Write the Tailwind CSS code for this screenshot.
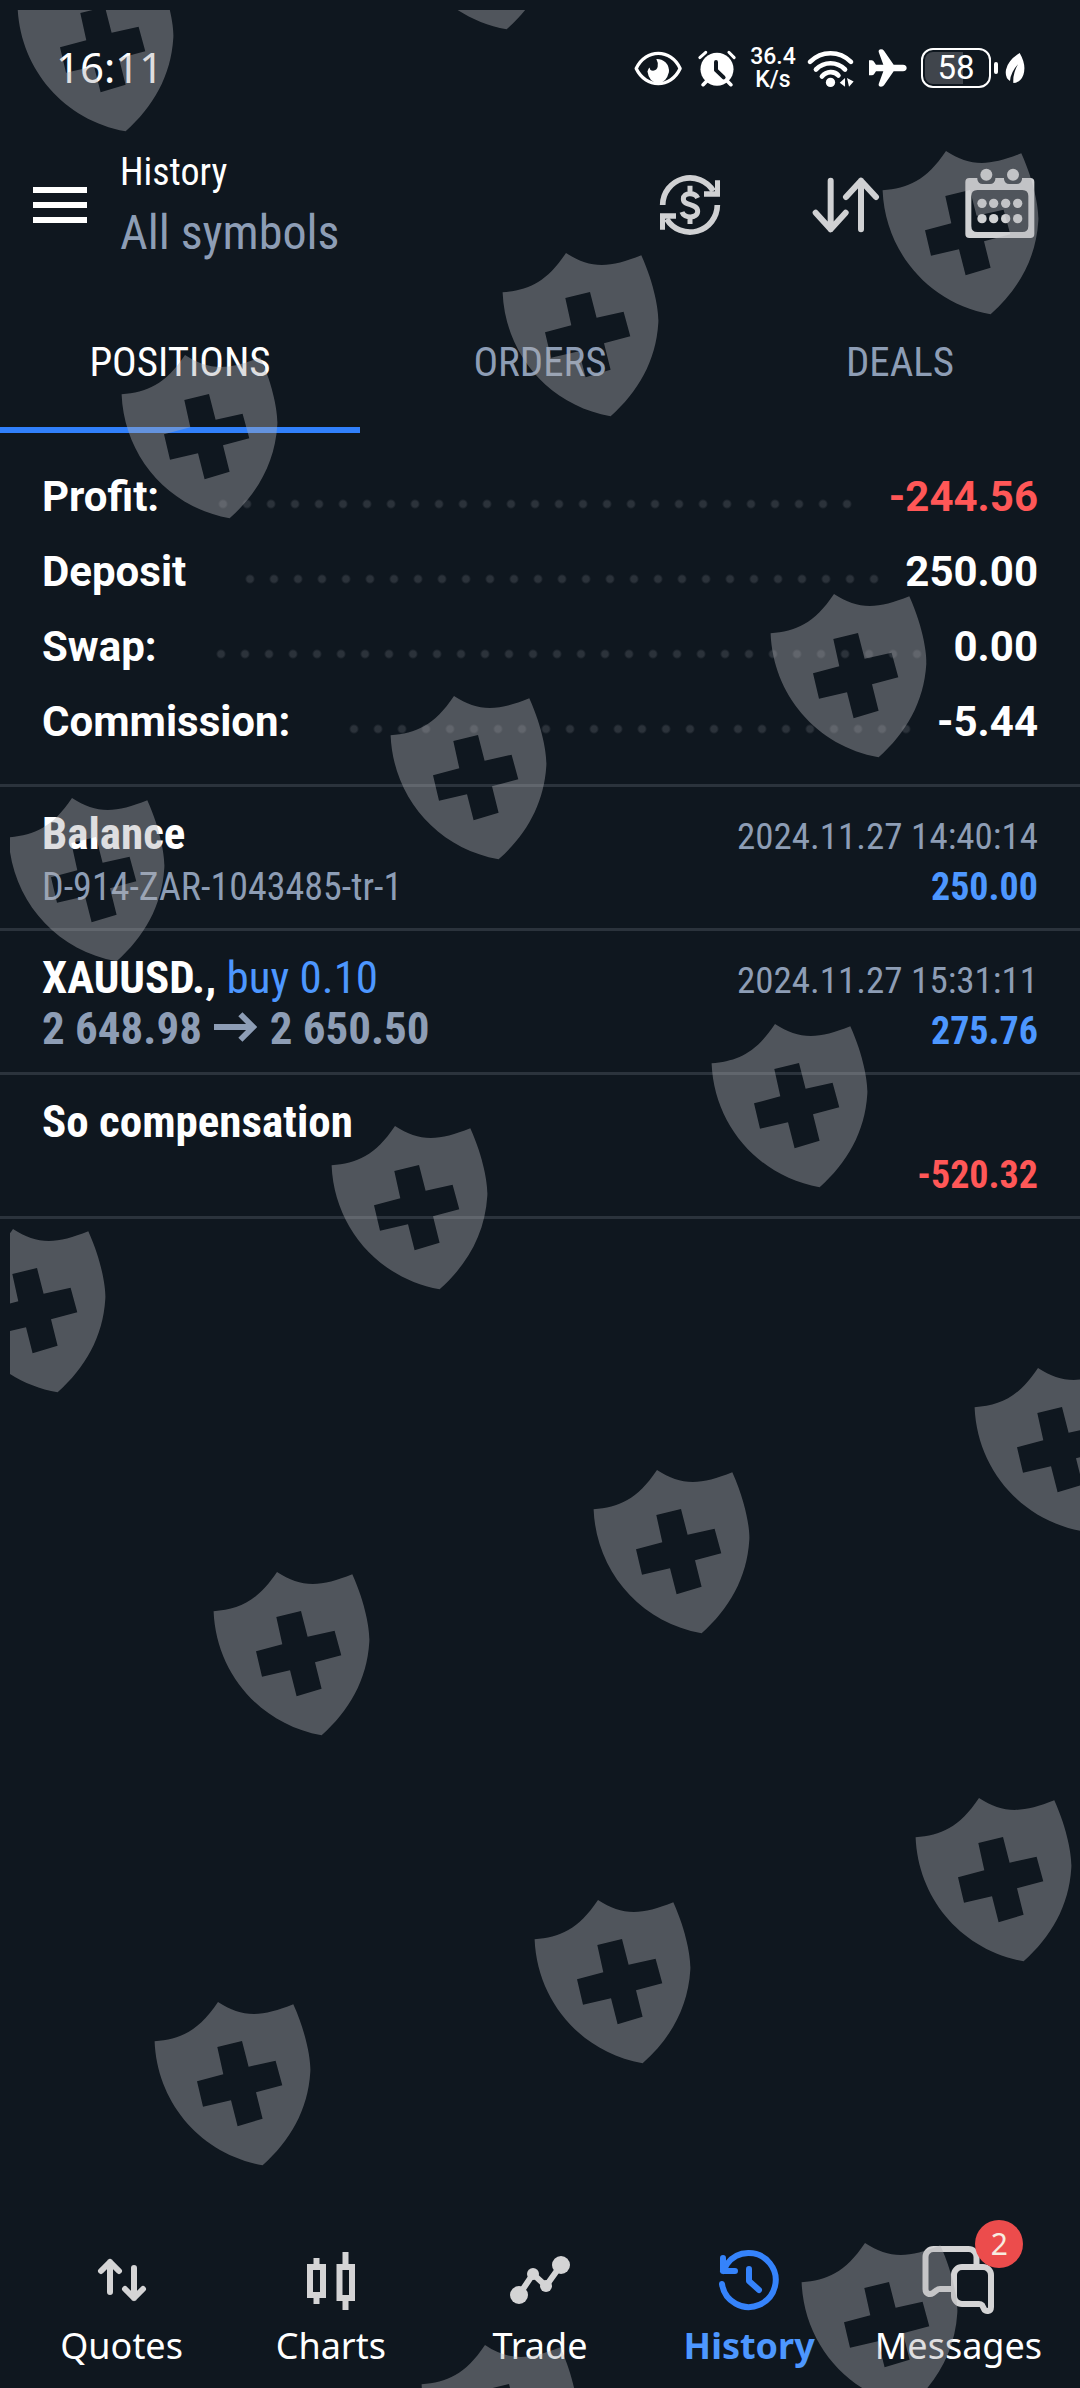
<!DOCTYPE html>
<html lang="en">
<head>
<meta charset="utf-8">
<meta name="viewport" content="width=device-width, initial-scale=1">
<title>History</title>
<script src="https://cdn.jsdelivr.net/npm/@tailwindcss/browser@4"></script>
</head>
<body class="bg-[#0f171f] text-white">
<div class="relative flex min-h-screen flex-col overflow-hidden font-['Roboto_Condensed','Roboto',sans-serif]">

  <!-- status bar -->
  <div class="flex h-[136px] items-center justify-between pl-[56px] pr-[54px]">
    <span class="pb-1 font-['Noto_Sans',sans-serif] text-[42px]">16:11</span>
    <div class="flex items-center">
      <svg class="h-[35px] w-[50px]" viewBox="100 148 150 106" aria-label="Eye comfort">
        <path d="M109 201C138 140 214 140 242 201C214 262 138 262 109 201Z" fill="none" stroke="#fff" stroke-width="10" stroke-linejoin="round"/>
        <path d="M170 172A36 36 0 0 1 208 212Q200 244 176 245Q148 244 143 210Q146 200 150 198Q150 208 160 208Q172 206 174 196Q176 182 170 172Z" fill="#fff"/>
      </svg>
      <svg class="ml-[14px] h-[37px] w-10" viewBox="290 145 120 112" aria-label="Alarm">
        <circle cx="350" cy="203" r="50" fill="#fff"/>
        <path d="M298 168L316 152M386 152L402 168" stroke="#fff" stroke-width="9" stroke-linecap="round"/>
        <path d="M322 236L308 250M378 236L392 250" stroke="#fff" stroke-width="11" stroke-linecap="round"/>
        <path d="M347 181V206L370 228" fill="none" stroke="#0f171f" stroke-width="12" stroke-linecap="round" stroke-linejoin="round"/>
      </svg>
      <span class="ml-[13px] w-[46px] text-center font-['Roboto',sans-serif] text-[23px] leading-[23px] font-medium">36.4<br>K/s</span>
      <svg class="ml-[10px] h-[39px] w-[49px]" viewBox="618 141 148 118" aria-label="Wi-Fi">
        <g fill="none" stroke="#fff" stroke-width="14" stroke-linecap="round">
          <path d="M630 180C665 145 719 145 754 180"/>
          <path d="M648 203C673 178 711 178 736 203"/>
          <path d="M666 224C680 207 704 207 716 221"/>
        </g>
        <circle cx="692" cy="242" r="14" fill="#fff"/>
        <path d="M720 243L736 229V255ZM742 229L762 239L748 255Z" fill="#fff"/>
      </svg>
      <svg class="ml-[13px] h-10 w-10" viewBox="803 141 120 120" aria-label="Airplane mode">
        <path d="M806 178H814Q819 178 822 184L827 191H849L835 153Q834 145 842 145Q848 145 851 149L880 191H908Q919 192 919 201Q919 210 908 211H880L851 253Q848 257 842 257Q834 257 835 249L849 211H827L822 218Q819 223 814 223H806Z" fill="#fff"/>
      </svg>
      <div class="relative ml-[13px] flex h-10 w-[70px] items-center justify-center overflow-hidden rounded-xl border-2 border-white">
        <span class="absolute inset-y-0.5 left-0.5 w-[58%] rounded-l-lg bg-[#40454c]"></span>
        <span class="relative font-['Roboto',sans-serif] text-[33px] leading-9">58</span>
      </div>
      <span class="ml-[3px] h-3 w-1 rounded-sm bg-white"></span>
      <svg class="ml-[6px] h-8 w-[22px]" viewBox="1212 151 66 96" aria-label="Power saving">
        <path d="M1259 154Q1280 190 1270 220Q1262 242 1240 244Q1238 215 1254 188Q1232 212 1230 238Q1214 228 1218 204Q1224 176 1259 154Z" fill="#fff"/>
      </svg>
    </div>
  </div>

  <!-- toolbar -->
  <header class="flex h-[138px] items-center pl-[33px] pr-[45px]">
    <button class="flex w-[54px] flex-col gap-[9px]" aria-label="Menu">
      <span class="h-1.5 w-full bg-white"></span><span class="h-1.5 w-full bg-white"></span><span class="h-1.5 w-full bg-white"></span>
    </button>
    <div class="ml-[33px] flex-1 pt-0.5">
      <h1 class="text-[38px] leading-[54px]">History</h1>
      <p class="text-[48px] leading-[68px] text-[#8d9db5]">All symbols</p>
    </div>
    <div class="flex items-center">
      <button aria-label="Currency">
        <svg class="h-16 w-16" viewBox="174 519 192 192">
          <g fill="none" stroke="#d0d1d3">
            <path d="M188 615A82 82 0 0 1 340 573M352 615A82 82 0 0 1 200 657" stroke-width="17"/>
            <path d="M293 594C286 577 250 576 250 597C250 620 293 608 293 634C293 656 252 656 246 636M270 557V580M270 652V672" stroke-width="15"/>
          </g>
          <path d="M345 541H360V590H312V574H345ZM195 689H180V640H228V656H195Z" fill="#d0d1d3"/>
        </svg>
      </button>
      <button class="ml-[89px]" aria-label="Sort">
        <svg class="h-[60px] w-[69px]" viewBox="634 525 207 180">
          <path d="M693 542V688M648 638L693 688L738 638M784 688V542M739 591L784 542L829 591" fill="none" stroke="#d0d1d3" stroke-width="18" stroke-linecap="round" stroke-linejoin="round"/>
        </svg>
      </button>
      <button class="ml-[85px]" aria-label="Select period">
        <svg class="h-[74px] w-[70px]" viewBox="1097 504 210 222">
          <path fill="#d0d1d3" fill-rule="evenodd" d="M1110 534H1293Q1305 534 1305 546V702Q1305 714 1293 714H1110Q1098 714 1098 702V546Q1098 534 1110 534ZM1134 570Q1116 570 1116 588V678Q1116 696 1134 696H1269Q1287 696 1287 678V588Q1287 570 1269 570Z"/>
          <path d="M1134 530V538Q1136 552 1150 552H1172Q1186 552 1188 538V530ZM1214 530V538Q1216 552 1230 552H1252Q1266 552 1268 538V530Z" fill="#0f171f"/>
          <g fill="#d0d1d3">
            <circle cx="1161" cy="524" r="18"/><circle cx="1241" cy="524" r="18"/>
            <circle cx="1148" cy="610" r="14"/><circle cx="1183" cy="610" r="14"/><circle cx="1219" cy="610" r="14"/><circle cx="1255" cy="610" r="14"/>
            <circle cx="1148" cy="656" r="14"/><circle cx="1183" cy="656" r="14"/><circle cx="1219" cy="656" r="14"/><circle cx="1255" cy="656" r="14"/>
          </g>
        </svg>
      </button>
    </div>
  </header>

  <!-- tabs -->
  <div class="grid h-[159px] grid-cols-3 text-[41px] text-[#8d9db5]" role="tablist">
    <button class="border-b-6 border-[#3180fb] pt-6 text-white" role="tab" aria-selected="true">POSITIONS</button>
    <button class="border-b-6 border-transparent pt-6" role="tab">ORDERS</button>
    <button class="border-b-6 border-transparent pt-6" role="tab">DEALS</button>
  </div>

  <!-- account summary -->
  <dl class="border-b-3 border-[#2b333c] px-[42px] pt-[26px] pb-[25px] font-['Roboto',sans-serif] text-[42px] leading-[75px] font-bold">
    <div class="flex">
      <dt>Profit:</dt>
      <dd class="flex flex-1"><span class="mt-[33px] mr-[30px] ml-[52px] h-6 flex-1 bg-[radial-gradient(circle,#2b323a_3px,transparent_5px)] bg-[length:24px_24px] bg-repeat-x"></span><span class="text-[#ff5757]">-244.56</span></dd>
    </div>
    <div class="flex">
      <dt>Deposit</dt>
      <dd class="flex flex-1"><span class="mt-[33px] mr-[26px] ml-[52px] h-6 flex-1 bg-[radial-gradient(circle,#2b323a_3px,transparent_5px)] bg-[length:24px_24px] bg-repeat-x"></span><span>250.00</span></dd>
    </div>
    <div class="flex">
      <dt>Swap:</dt>
      <dd class="flex flex-1"><span class="mt-[33px] mr-[26px] ml-[52px] h-6 flex-1 bg-[radial-gradient(circle,#2b323a_3px,transparent_5px)] bg-[length:24px_24px] bg-repeat-x"></span><span>0.00</span></dd>
    </div>
    <div class="flex">
      <dt>Commission:</dt>
      <dd class="flex flex-1"><span class="mt-[33px] mr-[26px] ml-[52px] h-6 flex-1 bg-[radial-gradient(circle,#2b323a_3px,transparent_5px)] bg-[length:24px_24px] bg-repeat-x"></span><span>-5.44</span></dd>
    </div>
  </dl>

  <!-- history entries -->
  <ul class="text-[38px] leading-[57px] text-[#8d9db5]">
    <li class="border-b-3 border-[#2b333c] px-[42px] pt-[21px] pb-3">
      <div class="flex h-[51px] items-baseline justify-between">
        <h2 class="text-[45px] leading-[51px] font-bold text-white">Balance</h2>
        <time class="text-[37px] leading-[51px]">2024.11.27 14:40:14</time>
      </div>
      <div class="flex items-baseline justify-between">
        <p>D-914-ZAR-1043485-tr-1</p>
        <p class="font-bold text-[#4d97ff]">250.00</p>
      </div>
    </li>
    <li class="border-b-3 border-[#2b333c] px-[42px] pt-[21px] pb-3">
      <div class="flex h-[51px] items-baseline justify-between">
        <h2 class="text-[45px] leading-[51px] font-bold text-white">XAUUSD., <span class="font-normal text-[#4d97ff]">buy 0.10</span></h2>
        <time class="text-[37px] leading-[51px]">2024.11.27 15:31:11</time>
      </div>
      <div class="flex items-baseline justify-between">
        <p class="text-[45px] leading-[51px] font-bold">2 648.98 <svg class="mx-0.5 inline-block h-[30px] w-[43px] align-[2px]" viewBox="0 0 44 30" role="img" aria-label="to"><path d="M0 15H40M27 2L40 15L27 28" fill="none" stroke="#8d9db5" stroke-width="6"/></svg> 2 650.50</p>
        <p class="font-bold text-[#4d97ff]">275.76</p>
      </div>
    </li>
    <li class="border-b-3 border-[#2b333c] px-[42px] pt-[21px] pb-3">
      <h2 class="text-[45px] leading-[51px] font-bold text-white">So compensation</h2>
      <p class="text-right font-bold text-[#ff5757]">-520.32</p>
    </li>
  </ul>

  <!-- bottom navigation -->
  <nav class="mt-auto grid grid-cols-5 px-[17px] pb-[18px] font-['Noto_Sans',sans-serif] text-[36px] leading-[48px]">
    <a href="#" class="flex flex-col items-center gap-1.5">
      <svg class="size-[72px]" viewBox="0 0 72 72"><path d="M24 48V18M15 27L24 18L33 27M48 24V54M39 45L48 54L57 45" fill="none" stroke="#d4d4d5" stroke-width="6" stroke-linecap="round" stroke-linejoin="round"/></svg>
      Quotes
    </a>
    <a href="#" class="flex flex-col items-center gap-1.5">
      <svg class="size-[72px]" viewBox="0 0 72 72"><path d="M15 23H28V51H15ZM44.500 23H57V54H44.500ZM21.500 14V22M21.500 52V60M50.500 8V22M50.500 55V66" fill="none" stroke="#d4d4d5" stroke-width="6"/></svg>
      Charts
    </a>
    <a href="#" class="flex flex-col items-center gap-1.5">
      <svg class="size-[72px]" viewBox="0 0 72 72" fill="#d4d4d5"><path d="M15 51L29 30L42 42L57 21" fill="none" stroke="#d4d4d5" stroke-width="6"/><circle cx="15" cy="51" r="9"/><circle cx="29" cy="30" r="6"/><circle cx="42" cy="42" r="6"/><circle cx="57" cy="21" r="9"/></svg>
      Trade
    </a>
    <a href="#" class="flex flex-col items-center gap-1.5 font-bold text-[#4d97ff]" aria-current="page">
      <svg class="size-[72px]" viewBox="0 0 72 72" fill="none" stroke="#3583fb" stroke-width="6" stroke-linecap="round" stroke-linejoin="round"><path d="M9 40A27 27 0 1 0 14 20L10 27M10 14V27H22"/><path d="M9 17V28H19Z" fill="#3583fb" stroke="none"/><path d="M36 25V37L46 46"/></svg>
      History
    </a>
    <a href="#" class="relative flex flex-col items-center gap-1.5">
      <svg class="size-[72px]" viewBox="0 0 72 72" fill="none" stroke="#d4d4d5" stroke-width="6"><path d="M54.500 20V13a8 8 0 0 0-8-8H11.500a8 8 0 0 0-8 8V45C3.500 50 8 51 11 49L15 46Q16 45 18 45H31"/><path d="M40 23H61a8 8 0 0 1 8 8V63C69 68 63 68 62 65L60 61Q59 60 57 60H40a8 8 0 0 1-8-8V31a8 8 0 0 1 8-8Z"/></svg>
      Messages
      <span class="absolute -top-6 left-1/2 ml-[17px] flex size-12 items-center justify-center rounded-full bg-[#ec4c4c] text-[30px] leading-none text-[#f7ece0]">2</span>
    </a>
  </nav>

  <!-- shield watermark over the whole screen -->
  <div class="pointer-events-none absolute top-2.5 right-0 bottom-0 left-2.5 overflow-hidden" aria-hidden="true">
    <svg class="h-full w-full overflow-hidden text-[#b0b0b4]/41">
      <defs>
        <path id="shield" fill="currentColor" fill-rule="evenodd" d="M-63.400 39.300C-38 37-20 30 0 0C24 16 44 15 75.300 2.300C90 35 93 62 92.300 70C90 108 72 139 44.600 163.300C-18 152-61 100-63.400 39.300ZM-.700 45L24 39L30.600 64.700L57.600 58.700L64.300 83.300L38 90.300L44.600 116.700L19.600 124.300L13 98.300L-15 104.700L-21 79.300L5.300 72.300Z"/>
      </defs>
      <use href="#shield" x="71" y="-42"/><use href="#shield" x="452" y="-144"/>
      <use href="#shield" x="936" y="141"/><use href="#shield" x="556" y="243"/><use href="#shield" x="175" y="345"/>
      <use href="#shield" x="824" y="584"/><use href="#shield" x="444" y="686"/><use href="#shield" x="62" y="788"/>
      <use href="#shield" x="765" y="1014"/><use href="#shield" x="385" y="1116"/><use href="#shield" x="3" y="1219"/>
      <use href="#shield" x="1028" y="1358"/><use href="#shield" x="647" y="1460"/><use href="#shield" x="267" y="1562"/>
      <use href="#shield" x="969" y="1788"/><use href="#shield" x="588" y="1890"/><use href="#shield" x="208" y="1992"/>
      <use href="#shield" x="855" y="2233"/><use href="#shield" x="475" y="2335"/>
    </svg>
  </div>
</div>
</body>
</html>
